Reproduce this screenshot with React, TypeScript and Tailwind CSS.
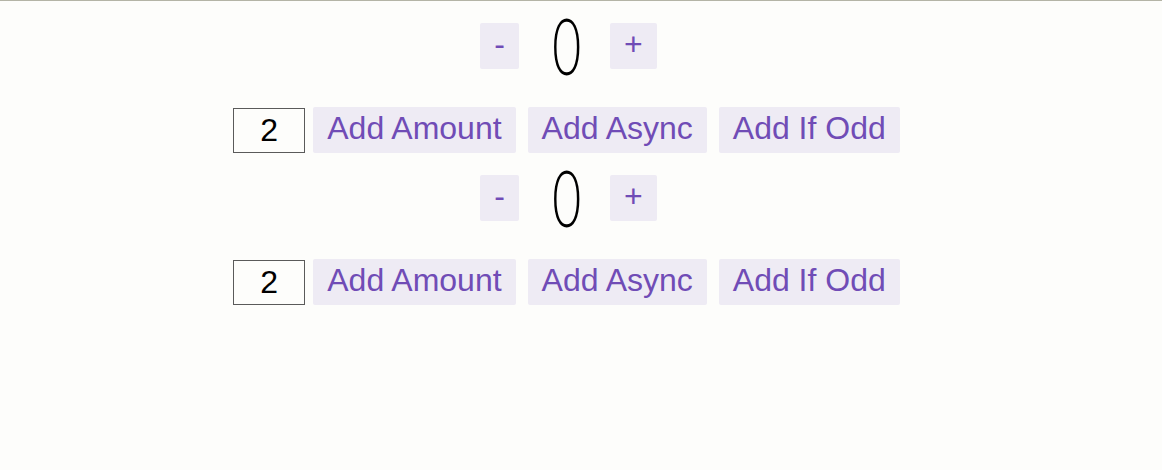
import React, { useState } from 'react';

const btn =
  'appearance-none text-[32px] leading-[38px] px-3 pb-1 border-2 border-transparent text-[rgb(112,76,182)] bg-[rgba(112,76,182,0.1)] rounded-[2px] ml-1 mr-2 cursor-pointer';

const Counter: React.FC = () => {
  const [count, setCount] = useState(0);
  const [amount, setAmount] = useState('2');
  const inc = Number(amount) || 0;

  return (
    <div>
      <div className="flex items-center justify-center mb-4">
        <button className={btn} aria-label="Decrement value" onClick={() => setCount(count - 1)}>
          -
        </button>
        <span className="mx-4 mt-[2px] w-[47px] h-[88px] flex items-center justify-center text-[78px] leading-[88px] font-['Lato',sans-serif] font-light text-black">
          <span className="inline-block scale-x-[0.64] -translate-y-[2px]">{count}</span>
        </span>
        <button className={btn} aria-label="Increment value" onClick={() => setCount(count + 1)}>
          +
        </button>
      </div>
      <div className="flex items-center justify-center">
        <input
          className="text-[32px] leading-[37px] p-[2px] w-[72px] h-[45px] mt-[1px] text-center mr-1 border border-[#5a5a5a] bg-transparent text-black"
          aria-label="Set increment amount"
          value={amount}
          onChange={(e) => setAmount(e.target.value)}
        />
        <button className={btn} onClick={() => setCount(count + inc)}>
          Add Amount
        </button>
        <button className={btn} onClick={() => setTimeout(() => setCount((c) => c + inc), 1000)}>
          Add Async
        </button>
        <button className={btn} onClick={() => count % 2 !== 0 && setCount(count + inc)}>
          Add If Odd
        </button>
      </div>
    </div>
  );
};

const App: React.FC = () => {
  return (
    <div className="min-h-[470px] w-[1162px] bg-[#fdfdfb] border-t border-[#b4b4a6] pr-[21px] font-['Liberation_Sans',Arial,sans-serif]">
      <Counter />
      <Counter />
    </div>
  );
};

export default App;
